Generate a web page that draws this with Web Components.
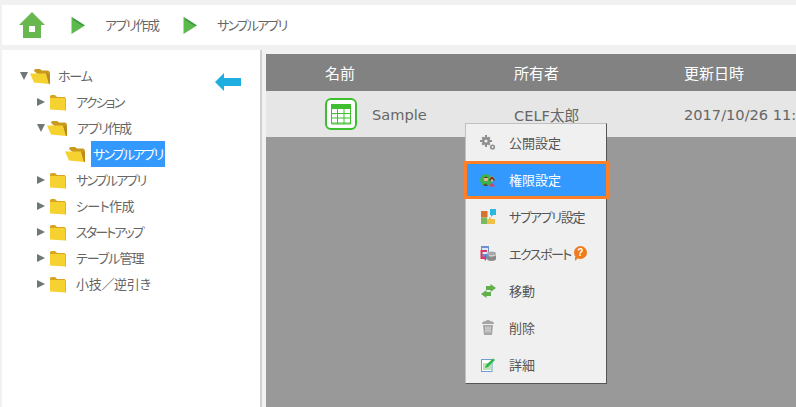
<!DOCTYPE html>
<html lang="ja">
<head>
<meta charset="utf-8">
<title>アプリ</title>
<style>
html, body { margin: 0; height: 100%; overflow: hidden; }
body {
    width: 796px; height: 407px; background: #f1f1f1; color: #595959;
    font-family: "Noto Sans CJK JP", "DejaVu Sans", sans-serif;
    font-feature-settings: "palt";
    display: flex; flex-direction: column;
}
</style>
</head>
<body>
<app-breadcrumb></app-breadcrumb>
<app-shell>
    <folder-tree slot="side"></folder-tree>
    <file-list slot="main"></file-list>
</app-shell>

<script>
const FOLDER_CLOSED = `<svg width="18" height="17" viewBox="0 0 18 17">
    <path d="M1 2.500 Q1 1 2.500 1 H6 L8 3 H16 V15.500 L1 14.500Z" fill="#d9a521"/>
    <path d="M1 4 H16.500 V16.500 L1 15.500Z" fill="#f5d22f"/>
    <path d="M16 4 H17 V16.500 H16Z" fill="#e0b52a"/></svg>`;
const FOLDER_OPEN = `<svg width="22" height="17" viewBox="0 0 22 17">
    <path d="M5 3 Q5 1 7 1 H11 L13 2.500 H19 Q21 3 21 5 V16.500 Z" fill="#c99a1f"/>
    <path d="M1 5.500 H17 L20 16 L5 14.500Z" fill="#f5d22f"/>
    <path d="M17 5 L20 16 L21 16 L21 7Z" fill="#b98c1c"/></svg>`;

class AppBreadcrumb extends HTMLElement {
    constructor() {
        super();
        this.attachShadow({ mode: 'open' });
    }

    connectedCallback() {
        const arrow = `<svg class="arrow" width="14" height="17" viewBox="0 0 14 17">
            <path d="M0.500 0 L14 8.500 L0.500 17Z" fill="#5cb94e"/>
            <path d="M0.500 0 L14 8.500 L11 8.500 L3 3.500Z" fill="#3f9a3c"/></svg>`;
        this.shadowRoot.innerHTML = `
            <style>
                :host {
                    display: flex; align-items: center; flex: none;
                    height: 40px; margin: 5px 0 5px 2px;
                    background: #fff; font-size: 13px; color: #666;
                }
                .home { margin-left: 16px; width: 28px; height: 27px; display: block; }
                .arrow { flex: none; }
                .a1 { margin-left: 25px; display: flex; }
                .a2 { display: flex; width: 14px; }
                span { margin-left: 20px; line-height: 16px; letter-spacing: -1.8px; }
                .s1 { width: 78px; flex: none; white-space: nowrap; letter-spacing: -1.4px; }
            </style>
            <svg class="home" viewBox="0 0 28 27">
                <path d="M14 0 L27 13 H23 V26 H5 V13 H1Z" fill="#69b84f"/>
                <rect x="11" y="14" width="6" height="6" fill="#fff"/>
            </svg>
            <div class="a1">${arrow}</div><span class="s1">アプリ作成</span>
            <div class="a2">${arrow}</div><span>サンプルアプリ</span>
        `;
    }
}
customElements.define('app-breadcrumb', AppBreadcrumb);

class AppShell extends HTMLElement {
    constructor() {
        super();
        this.attachShadow({ mode: 'open' });
    }

    connectedCallback() {
        this.shadowRoot.innerHTML = `
            <style>
                :host { display: flex; flex: 1; min-height: 0; padding-left: 2px; }
                .side { width: 258px; flex: none; background: #fff; border-right: 2px solid #d0d0d0; }
                .main { flex: 1; margin: 4px 0 0 4px; min-width: 0; position: relative; background: #999; }
            </style>
            <div class="side"><slot name="side"></slot></div>
            <div class="main"><slot name="main"></slot></div>
        `;
    }
}
customElements.define('app-shell', AppShell);

class TreeRow extends HTMLElement {
    constructor() {
        super();
        this.attachShadow({ mode: 'open' });
    }

    connectedCallback() {
        const open = this.hasAttribute('open');
        const leaf = this.hasAttribute('leaf');
        const twisty = open
            ? '<svg width="8" height="8" viewBox="0 0 8 8"><path d="M0 0 H8 L4 8Z" fill="#6f7777"/></svg>'
            : '<svg width="8" height="8" viewBox="0 0 8 8"><path d="M0 0 L8 4 L0 8Z" fill="#6f7777"/></svg>';
        this.shadowRoot.innerHTML = `
            <style>
                :host {
                    display: flex; align-items: center; height: 26px;
                    padding-left: var(--indent, 35px); font-size: 13px; color: #666;
                }
                .tw { width: 8px; display: flex; flex: none; }
                .ic { display: flex; flex: none; margin-left: var(--icon-gap, 5px); }
                .lb { margin-left: var(--label-gap, 9px); line-height: 24px; white-space: nowrap; padding: 0 2px; }
                :host([selected]) .lb { background: #3399ff; color: #fff; height: 26px; line-height: 26px; }
            </style>
            <span class="tw">${leaf ? '' : twisty}</span>
            <span class="ic">${open || leaf ? FOLDER_OPEN : FOLDER_CLOSED}</span>
            <span class="lb"><slot></slot></span>
        `;
    }
}
customElements.define('tree-row', TreeRow);

class FolderTree extends HTMLElement {
    constructor() {
        super();
        this.attachShadow({ mode: 'open' });
    }

    connectedCallback() {
        const items = [
            ['サンプルアプリ', -1.8], ['シート作成', -0.6], ['スタートアップ', -1.9],
            ['テーブル管理', -1], ['小技／逆引き', -0.3]
        ];
        this.shadowRoot.innerHTML = `
            <style>
                :host { display: block; position: relative; padding-top: 13px; height: 100%; box-sizing: border-box; }
                .back { position: absolute; left: 213px; top: 23px; }
                .root { --indent: 18px; --icon-gap: 1px; --label-gap: 5px; }
                .l1 { --indent: 35px; --icon-gap: 4px; --label-gap: 7px; }
                .open1 { --indent: 35px; --icon-gap: 1px; --label-gap: 7px; }
                .l2 { --indent: 54px; --icon-gap: 0px; --label-gap: 5px; }
            </style>
            <svg class="back" width="26" height="18" viewBox="0 0 26 18">
                <path d="M0 9 L9 0 V5 H26 V13 H9 V18Z" fill="#1eaee0"/>
            </svg>
            <tree-row class="root" open style="letter-spacing:-1.2px">ホーム</tree-row>
            <tree-row class="l1" style="letter-spacing:-1.8px">アクション</tree-row>
            <tree-row class="open1" open style="letter-spacing:-1.4px">アプリ作成</tree-row>
            <tree-row class="l2" leaf selected style="letter-spacing:-1.8px">サンプルアプリ</tree-row>
            ${items.map(([label, track]) => `<tree-row class="l1" style="letter-spacing:${track}px">${label}</tree-row>`).join('')}
        `;
    }
}
customElements.define('folder-tree', FolderTree);

class ContextMenu extends HTMLElement {
    constructor() {
        super();
        this.attachShadow({ mode: 'open' });
    }

    connectedCallback() {
        const icons = {
            gear: `<svg width="16" height="16" viewBox="0 0 16 16"><g fill="#8f8f8f"><circle cx="6" cy="6" r="4"/><circle cx="12.500" cy="12" r="2.600"/>
                <path d="M5 0h2v3H5zM5 9h2v3H5zM0 5h3v2H0zM9 5h3v2H9zM1.500 3 3 1.500l2 2L3.500 5zM7 8.500 8.500 7l2 2L9 10.500zM1.500 9 3.500 7 5 8.500 3 10.500zM7 3.500 9 1.500 10.500 3l-2 2z"/></g>
                <circle cx="6" cy="6" r="1.600" fill="#f0f0f0"/><circle cx="12.500" cy="12" r="1" fill="#f0f0f0"/></svg>`,
            users: `<svg width="16" height="14" viewBox="0 0 16 14"><circle cx="6" cy="7" r="6" fill="#3cb34a"/>
                <circle cx="6" cy="6" r="2.200" fill="#e9b98f"/><path d="M3 13 Q6 8 8 13Z" fill="#5a4a3a"/><path d="M3.800 5 Q6 2.500 8.200 5Z" fill="#4a3320"/>
                <circle cx="12" cy="6" r="2.400" fill="#e9b98f"/><path d="M9.500 6 Q12 1 14.500 6 V8 H13.500 Q12 4 10.500 8 H9.500Z" fill="#6b3d20"/><path d="M9 13.500 Q12 7 15 13.500Z" fill="#d0456b"/></svg>`,
            sub: `<svg width="15" height="15" viewBox="0 0 15 15"><rect x="0" y="2" width="6.500" height="6.500" fill="#d9722f"/><path d="M9 0h6v6h-3l-2 2V6H9z" fill="#2bb8e0"/>
                <rect x="0" y="8.500" width="6" height="6.500" fill="#7cb860"/><path d="M6 10h2V8.500h2V10h4v5H6z" fill="#eec04a"/></svg>`,
            exp: `<svg width="16" height="16" viewBox="0 0 16 16"><rect x="1" y="0" width="8" height="13" fill="#6d8fd0"/><rect x="2" y="2" width="6" height="6" fill="#dfe6f5"/>
                <path d="M7 5 H1.500 V12 H6" fill="none" stroke="#d8365a" stroke-width="2"/><path d="M6 9 L3 12 L6 15Z" fill="#d8365a"/>
                <ellipse cx="11.500" cy="7.500" rx="4.500" ry="2" fill="#a8a8a8"/><path d="M7 8.500v4.500c0 1 2 2 4.500 2s4.500-1 4.500-2V8.500c0 1-2 2-4.500 2S7 9.500 7 8.500z" fill="#8a8a8a"/></svg>`,
            move: `<svg width="15" height="14" viewBox="0 0 15 14"><g fill="#62b04c"><path d="M15 4 L9.500 0 V2 H5 V6 H9.500 V8Z"/><path d="M0 10 L5.500 6 V8 H10 V12 H5.500 V14Z"/></g></svg>`,
            trash: `<svg width="12" height="15" viewBox="0 0 12 15"><path d="M0 4 Q0 1 4 1 Q4 0 6 0 Q8 0 8 1 Q12 1 12 4Z" fill="#a5a5a5"/><path d="M1 5 H11 L10 15 H2Z" fill="#a5a5a5"/><rect x="3" y="6.500" width="6" height="6" fill="#c4c4c4"/></svg>`,
            detail: `<svg width="14" height="14" viewBox="0 0 14 14"><rect x="0.500" y="1.500" width="10.500" height="12" fill="#fff" stroke="#6c9fd8"/><rect x="2" y="5" width="8" height="7" fill="#bfe0b5"/>
                <path d="M4 10 L5 7 L12 0.500 L14 2 L7 9Z" fill="#2cb84a"/></svg>`
        };
        const rows = [
            ['gear', '公開設定', 0], ['users', '権限設定', 0, 'active'], ['sub', 'サブアプリ設定', -1.3],
            ['exp', 'エクスポート', -1.5, '', true], ['move', '移動', 0], ['trash', '削除', 0], ['detail', '詳細', 0]
        ];
        this.shadowRoot.innerHTML = `
            <style>
                :host {
                    display: block; width: 140px;
                    background: #f0f0f0; border: 1px solid #555; border-color: #c0c0c0 #555 #555 #c0c0c0;
                    font-size: 13px; color: #555;
                }
                .row { display: flex; align-items: center; height: 37px; padding-left: 14px; position: relative; }
                .ic { width: 16px; display: flex; justify-content: center; flex: none; }
                .lb { margin-left: 13px; white-space: nowrap; }
                .active {
                    background: #3399ff; color: #fff; height: 38px; box-sizing: border-box;
                    margin: 0 -3px -1px -2px; z-index: 1;
                    border: 3px solid #ff7f27; padding: 0 0 1px 13px;
                }
                .help { width: 13px; height: 13px; border-radius: 50%; background: #ee7b1e; color: #fff; font: bold 10px/13px "Liberation Sans", sans-serif; text-align: center; margin-left: 3px; position: relative; top: -1px; }
                .help::after { content: ""; position: absolute; left: 1px; bottom: -2px; border: 2px solid transparent; border-left-color: #ee7b1e; border-top-color: #ee7b1e; }
            </style>
            ${rows.map(([icon, label, track, cls, help]) => `
                <div class="row ${cls || ''}">
                    <span class="ic">${icons[icon]}</span>
                    <span class="lb" style="letter-spacing:${track}px">${label}</span>
                    ${help ? '<span class="help">?</span>' : ''}
                </div>
            `).join('')}
        `;
    }
}
customElements.define('context-menu', ContextMenu);

class FileList extends HTMLElement {
    constructor() {
        super();
        this.attachShadow({ mode: 'open' });
    }

    connectedCallback() {
        this.shadowRoot.innerHTML = `
            <style>
                :host { display: block; height: 100%; white-space: nowrap; overflow: hidden; }
                .head, .row { display: flex; align-items: center; }
                .head { height: 37px; background: #828282; color: #fff; font-size: 15px; }
                .row { height: 46px; background: #e6e6e6; color: #666; font-size: 14.6px; }
                .name { flex: none; display: flex; align-items: center; padding-left: 59px; width: 189px; }
                .owner { width: 170px; flex: none; }
                .icon { width: 32px; height: 32px; display: block; margin-right: 15px; }
                .latin { font-family: "DejaVu Sans", "Noto Sans CJK JP", sans-serif; }
                context-menu { position: absolute; left: 199px; top: 69px; }
            </style>
            <div class="head">
                <div class="name">名前</div><div class="owner">所有者</div><div>更新日時</div>
            </div>
            <div class="row">
                <div class="name">
                    <svg class="icon" viewBox="0 0 32 32">
                        <rect x="1" y="1" width="30" height="30" rx="5" fill="#fff" stroke="#3fbf2f" stroke-width="2"/>
                        <rect x="6" y="6" width="20" height="5" fill="#3fbf2f"/>
                        <path d="M6.500 11v15h19V11M6 15.500h20M6 20h20M6 25h20M12.500 11v15M19 11v15" fill="none" stroke="#3fbf2f"/>
                    </svg>
                    <span class="latin">Sample</span>
                </div>
                <div class="owner latin">CELF太郎</div>
                <div class="latin">2017/10/26 11:52</div>
            </div>
            <context-menu></context-menu>
        `;
    }
}
customElements.define('file-list', FileList);
</script>
</body>
</html>
